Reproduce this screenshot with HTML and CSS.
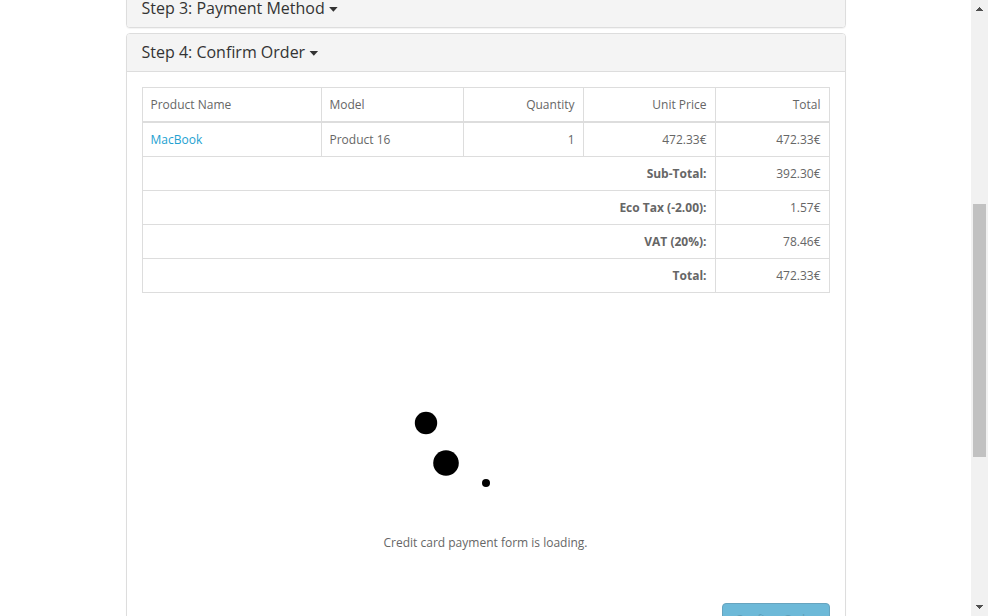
FILE: index.html
```html
<!DOCTYPE html>
<html lang="en">
<head>
<meta charset="utf-8">
<title>Checkout</title>
<link rel="stylesheet" href="styles.css">
</head>
<body>
<div class="window">
  <main class="page">
    <section class="panel">
      <h4 class="panel-heading">Step 3: Payment Method <i class="caret"></i></h4>
    </section>
    <section class="panel panel-open">
      <h4 class="panel-heading">Step 4: Confirm Order <i class="caret"></i></h4>
      <div class="panel-body">
        <table class="order">
          <colgroup><col class="c-name"><col class="c-model"><col class="c-qty"><col class="c-price"><col class="c-total"></colgroup>
          <thead>
            <tr><td>Product Name</td><td>Model</td><td class="num">Quantity</td><td class="num">Unit Price</td><td class="num">Total</td></tr>
          </thead>
          <tbody>
            <tr><td><a href="#">MacBook</a></td><td>Product 16</td><td class="num">1</td><td class="num">472.33€</td><td class="num">472.33€</td></tr>
            <tr><td colspan="4" class="num"><strong>Sub-Total:</strong></td><td class="num">392.30€</td></tr>
            <tr><td colspan="4" class="num"><strong>Eco Tax (-2.00):</strong></td><td class="num">1.57€</td></tr>
            <tr><td colspan="4" class="num"><strong>VAT (20%):</strong></td><td class="num">78.46€</td></tr>
            <tr><td colspan="4" class="num"><strong>Total:</strong></td><td class="num">472.33€</td></tr>
          </tbody>
        </table>
        <div class="loading">
          <svg class="spinner" width="150" height="100" viewBox="0 0 150 100">
            <circle cx="15" cy="20" r="11.2"/>
            <circle cx="35" cy="60" r="12.8"/>
            <circle cx="75" cy="80" r="4"/>
          </svg>
          <p>Credit card payment form is loading.</p>
        </div>
        <div class="buttons"><button class="btn" type="button">Confirm Order</button></div>
      </div>
    </section>
  </main>
  <div class="scrollbar">
    <svg width="17" height="17"><path d="M8 7h1v1h1v1h1v1h1v1H5v-1h1V9h1V8h1z"/></svg>
    <div class="thumb"></div>
    <svg class="down" width="17" height="17"><path d="M5 6h7v1h-1v1h-1v1H9v1H8V9H7V8H6V7H5z"/></svg>
  </div>
</div>
</body>
</html>
```
FILE: styles.css
```css
* { box-sizing: border-box; }
body {
  margin: 0;
  overflow: hidden;
  background: #fff;
  color: #666;
  font: 400 12px/20px "Open Sans", sans-serif;
}
.window { display: flex; height: 616px; overflow: hidden; }
.page { flex: 1; padding-left: 126px; }
.panel {
  width: 720px;
  margin-top: -11px;
  border: 1px solid #ddd;
  border-radius: 4px;
  background: #fff;
  box-shadow: 0 1px 1px rgba(0, 0, 0, .05);
}
.panel-open { height: 650px; margin-top: 5px; }
.panel-heading {
  height: 37px;
  margin: 0;
  padding: 10px 14.5px;
  border-radius: 3px;
  background: #f4f4f4;
  color: #333;
  font-size: 16px;
  font-weight: 400;
  line-height: 17px;
}
.panel-open .panel-heading {
  height: 38px;
  border-bottom: 1px solid #ddd;
  border-radius: 3px 3px 0 0;
}
.caret {
  display: inline-block;
  width: 9px;
  height: 5px;
  margin-bottom: 1px;
  vertical-align: middle;
  background: #333;
  clip-path: polygon(0 0, 100% 0, 50% 100%);
}
.panel-body { padding: 15px; }
.order {
  width: 688px;
  border-collapse: collapse;
  table-layout: fixed;
}
.c-name { width: 179px; }
.c-model { width: 142px; }
.c-qty { width: 120px; }
.c-price { width: 132px; }
.order td { height: 34px; padding: 7px 8.5px 6px 7.5px; border: 1px solid #ddd; }
.order thead td { border-bottom-width: 2px; }
.order .num { text-align: right; }
.order a { color: #23a1d1; text-decoration: none; }
.loading {
  display: flex;
  flex-direction: column;
  align-items: center;
  padding-top: 110px;
}
.spinner { display: block; }
.loading p { margin: 30px 1px 50px 0; }
.buttons { display: flex; justify-content: flex-end; }
.btn {
  width: 108px;
  padding: 6px 0 8px;
  border: 1px solid #67a4bf;
  border-radius: 4px;
  background: #6db9d8;
  color: #5d9fb9;
  font: 400 12px/20px "Open Sans", sans-serif;
}
.scrollbar {
  display: flex;
  flex-direction: column;
  width: 17px;
  background: #f1f1f1;
}
.scrollbar svg { display: block; fill: #505050; }
.thumb { width: 13px; height: 253px; margin: 187px 2px 0; background: #c1c1c1; }
.down { margin-top: auto; }
```
